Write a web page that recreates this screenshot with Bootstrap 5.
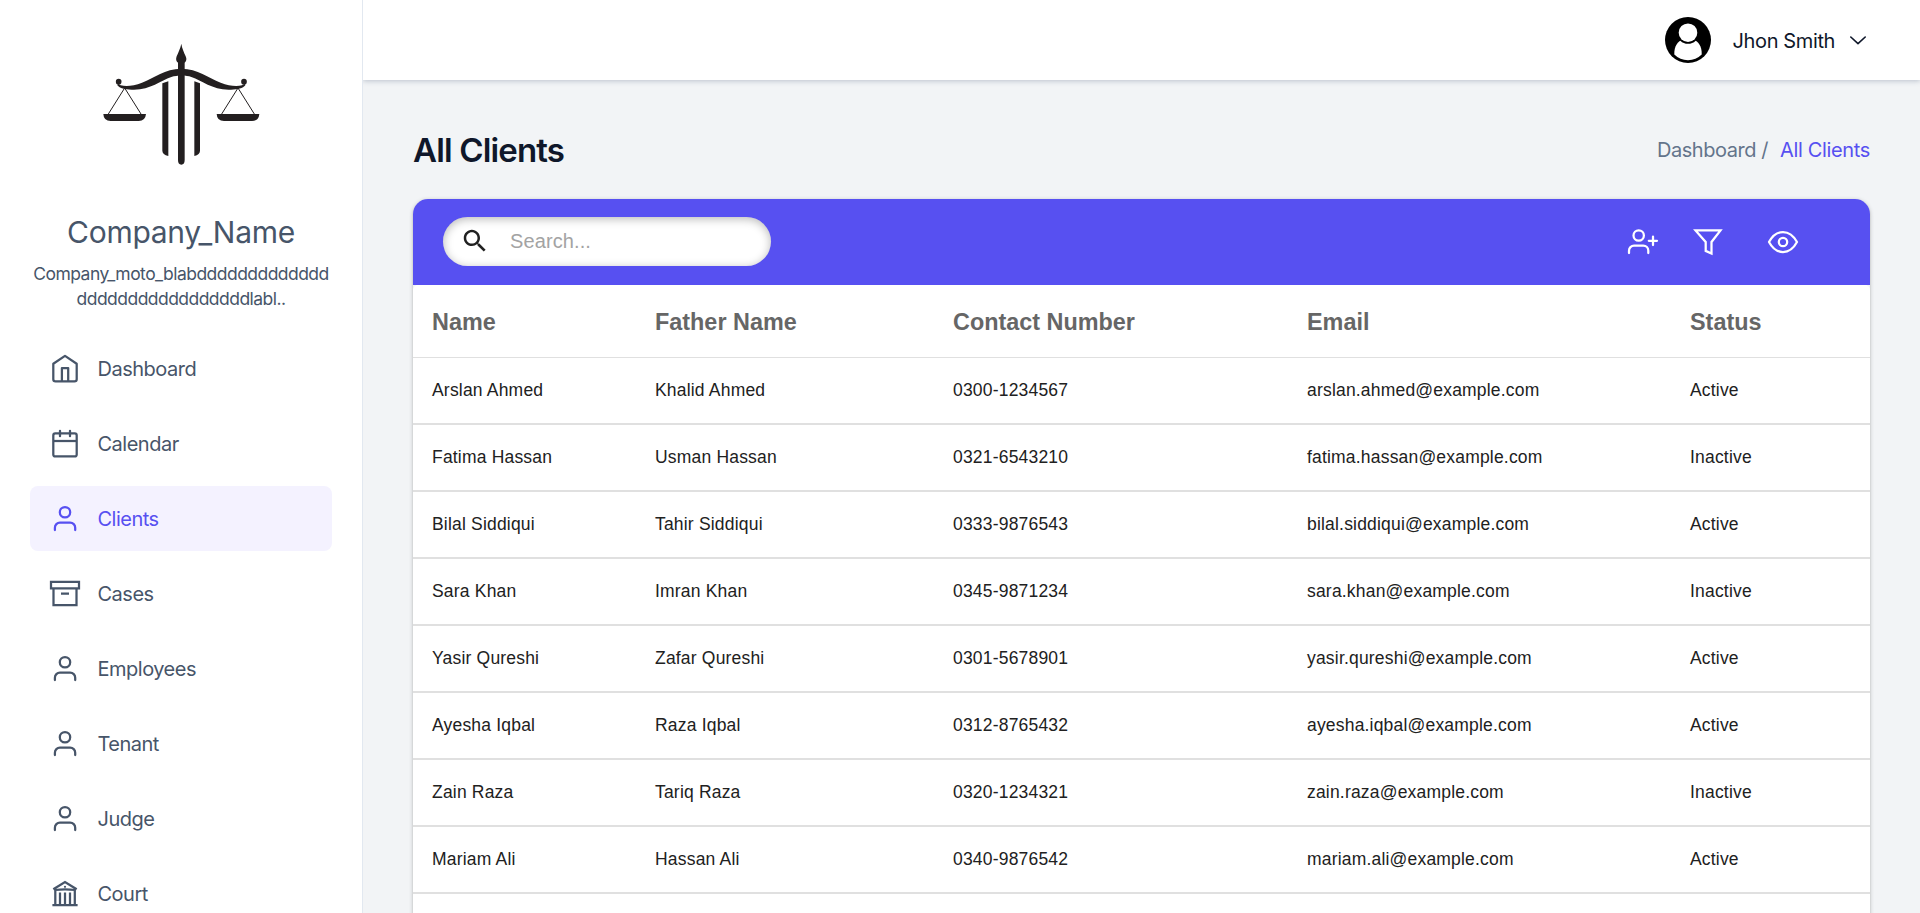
<!DOCTYPE html>
<html lang="en">
<head>
<meta charset="utf-8">
<meta name="viewport" content="width=device-width, initial-scale=1">
<title>All Clients</title>
<link href="https://cdn.jsdelivr.net/npm/bootstrap@5.3.0/dist/css/bootstrap.min.css" rel="stylesheet">
<style>
body{font-family:Inter,"Liberation Sans",sans-serif;font-size:20px;font-weight:400;color:#0f172a;background:#f2f4f6;letter-spacing:-.5px}
.side{width:363px;border-right:1px solid #e2e8f0;color:#475569}
.logo{margin-top:30px}
.company{font-size:30px;line-height:40px;font-weight:400;letter-spacing:-.3px;margin-top:32px}
.moto{font-size:17.5px;line-height:25px;font-weight:400;margin-top:9px;letter-spacing:-.54px}
.side-nav{gap:10px;padding:0 30px;margin-top:25px}
.side-nav .nav-link{height:65px;padding:1px 20px 0;gap:17.5px;color:#475569;border-radius:8px;white-space:nowrap}
.side-nav .nav-link.active{background:#f4f2ff;color:#5750f1}
.ic{width:30px;height:30px;fill:none;stroke:currentColor;stroke-width:2.25;flex:none;overflow:visible}
.topbar{height:80px;padding-right:54px;box-shadow:0 1px 5px rgba(100,116,139,.4);z-index:1}
.user{gap:22px}
.uname{padding-top:2px;letter-spacing:-.38px}
.chev{margin-left:-7px}
.page-title{font-size:33px;line-height:40px;font-weight:600;letter-spacing:-.85px}
.page-main{padding:50px 50px 0}
.crumb{color:#64748b;letter-spacing:-.45px}
.crumb a{color:#5750f1;text-decoration:none;letter-spacing:-.35px}
.panel{margin-top:29px;border-radius:15px 15px 0 0;box-shadow:0 2px 1px -1px rgba(0,0,0,.3),0 1px 1px rgba(0,0,0,.25),0 1px 4px rgba(0,0,0,.22)}
.tools{height:86px;padding:0 72px 0 30px;background:#5750f1;border-radius:15px 15px 0 0;color:#fff}
.find{width:328px;height:49px;margin-bottom:2px;padding-left:17px;gap:20px;border-radius:25px;box-shadow:inset 0 2px 10px rgba(0,0,0,.28)}
.find input{border:0;outline:0;background:none;font:400 20px "Liberation Sans",sans-serif;letter-spacing:.1px;width:220px;padding:1px 0 0}
.find input::placeholder{color:#a3a3a3;opacity:1}
.act-filter{margin-left:35px}
.act-view{margin-left:45px}
.clients{table-layout:fixed;width:100%;border-collapse:separate;border-spacing:0;background:#fff;border-radius:5px 5px 0 0;font-family:"Liberation Sans",Arial,sans-serif}
.clients th{height:73px;padding:4px 0 0 19px;font-size:23.4px;font-weight:700;letter-spacing:0;color:#666;border-bottom:1px solid #e0e0e0}
.clients td{height:67px;padding:0 0 0 19px;font-size:17.5px;font-weight:400;letter-spacing:.19px;color:#212121;border-bottom:2px solid #e0e0e0}
</style>
</head>
<body class="vh-100 overflow-hidden">
<svg class="d-none">
<symbol id="person" viewBox="0 0 30 30"><circle cx="15" cy="8.2" r="5.2"/><path d="M4.900 26v-2.300a5 5 0 0 1 5-5h10.300a5 5 0 0 1 5 5V26" stroke-linecap="round"/></symbol>
</svg>
<div class="d-flex vh-100">
<aside class="side bg-white flex-shrink-0 overflow-hidden">
  <div class="logo text-center lh-1">
    <svg class="d-block mx-auto" width="200" height="150" viewBox="2 0 600 450" fill="#231f20">
      <path d="M303 41c2 14 8 26 13 38 4 9 2 15-3 19v292q0 14-10 14t-10-14V98c-6-4-7-10-4-19 5-12 11-24 14-38z"/>
      <path d="M303 116c-50 0-80 28-118 42-25 10-47 12-64 8l-8-5-2 5c8 10 26 14 50 13 50 0 80-27 112-38 18-6 45-6 60 0 32 11 62 38 112 38 24 1 42-3 50-13l-2-5-8 5c-17 4-39 2-64-8-38-14-68-42-118-42z"/>
      <circle cx="115" cy="155" r="8.5"/><circle cx="491" cy="155" r="8.5"/>
      <path d="M246 160l18-6v224q-18-4-18-16zM359 160l-17-6v224q17-4 17-16z"/>
      <path d="M69 252h128q-2 21-22 21H91q-21 0-22-21zM409 252h128q-2 21-22 21h-84q-21 0-22-21z"/>
      <path d="M84 252l49-78 49 78M424 252l49-78 49 78" fill="none" stroke="#231f20" stroke-width="3"/>
    </svg>
  </div>
  <div class="company text-center">Company_Name</div>
  <div class="moto text-center">Company_moto_blabddddddddddddd<br>dddddddddddddddddlabl..</div>
  <nav class="side-nav nav flex-column flex-nowrap">
    <a class="nav-link d-flex align-items-center" href="#"><svg class="ic" viewBox="0 0 30 30"><path d="M15 1.900 3.300 9.700v15.500q0 2.200 2.200 2.200h19q2.200 0 2.200-2.200V9.700zM11.900 27.400V14.100h6.300v13.300" stroke-linejoin="round"/></svg>Dashboard</a>
    <a class="nav-link d-flex align-items-center" href="#"><svg class="ic" viewBox="0 0 30 30"><rect x="3.300" y="4.400" width="23.400" height="23" rx="2"/><path d="M3.300 12h23.400"/><path d="M10 1.800v5.400M20 1.800v5.400" stroke-linecap="round"/></svg>Calendar</a>
    <a class="nav-link active d-flex align-items-center" href="#"><svg class="ic"><use href="#person"/></svg>Clients</a>
    <a class="nav-link d-flex align-items-center" href="#"><svg class="ic" viewBox="0 0 30 30"><path d="M1 2.800h28v6.600H1zM3.500 9.400v16.800h23V9.400M11 14.600h8"/></svg>Cases</a>
    <a class="nav-link d-flex align-items-center" href="#"><svg class="ic"><use href="#person"/></svg>Employees</a>
    <a class="nav-link d-flex align-items-center" href="#"><svg class="ic"><use href="#person"/></svg>Tenant</a>
    <a class="nav-link d-flex align-items-center" href="#"><svg class="ic"><use href="#person"/></svg>Judge</a>
    <a class="nav-link d-flex align-items-center" href="#"><svg class="ic" viewBox="0 0 30 30"><path d="M3.300 10.300 15 3l11.700 7.300M5 11q10-1.200 20 0M5.300 10.800V25M10 13.400V25M15 13.400V25M20 13.400V25M24.800 10.800V25M2.400 26.200h25.200"/><circle cx="15" cy="7.800" r="1.100" fill="currentColor" stroke="none"/></svg>Court</a>
  </nav>
</aside>
<div class="flex-grow-1 d-flex flex-column overflow-hidden">
  <header class="topbar bg-white d-flex align-items-center justify-content-end flex-shrink-0 position-relative">
    <div class="user d-flex align-items-center">
      <svg width="46" height="46" viewBox="0 0 46 46"><circle cx="23" cy="23" r="23"/><path d="M9.300 37.500C9 29 13 24.500 16.500 23h13c3.500 1.500 7.500 6 7.200 14.500Q31 43.200 23 43.200T9.300 37.500z" fill="#fff"/><circle cx="23" cy="16" r="10.800"/><circle cx="23" cy="15.700" r="9.300" fill="#fff"/></svg>
      <span class="uname">Jhon Smith</span>
      <svg class="chev" width="16" height="9" viewBox="0 0 16 9" fill="none" stroke="#0f172a" stroke-width="1.600" stroke-linecap="round" stroke-linejoin="round"><path d="M.8 1 8 7.700 15.200 1"/></svg>
    </div>
  </header>
  <main class="page-main">
    <div class="d-flex align-items-center justify-content-between">
      <h1 class="page-title mb-0">All Clients</h1>
      <div class="crumb d-flex"><span>Dashboard /</span><a class="ms-2 ps-1" href="#">All Clients</a></div>
    </div>
    <section class="panel">
      <div class="tools d-flex align-items-center justify-content-between">
        <div class="find bg-white d-flex align-items-center"><svg width="30" height="30" viewBox="0 0 24 24" fill="#212121"><path d="M15.500 14h-.79l-.28-.27C15.410 12.590 16 11.110 16 9.500 16 5.910 13.090 3 9.500 3S3 5.910 3 9.500 5.910 16 9.500 16c1.610 0 3.090-.59 4.230-1.570l.27.28v.79l5 4.990L20.490 19zm-6 0C7.010 14 5 11.990 5 9.500S7.010 5 9.500 5 14 7.010 14 9.500 11.990 14 9.500 14"/></svg><input type="text" placeholder="Search..."></div>
        <div class="d-flex align-items-center">
          <svg class="ic" viewBox="0 0 30 30"><circle cx="10.700" cy="8.500" r="5.200"/><path d="M1 26v-2.300a5 5 0 0 1 5-5h9.300a5 5 0 0 1 5 5V26M25 9.500v8.500M20.800 13.800H29" stroke-linecap="round"/></svg>
          <svg class="ic act-filter" viewBox="0 0 30 30"><path d="M2.500 3.400h25L18.500 15v11.500l-5.800-2.600V15z"/></svg>
          <svg class="ic act-view" viewBox="0 0 30 30"><path d="M1 15C4.500 8.500 9 5 15 5s10.500 3.500 14 10c-3.500 6.500-8 10-14 10S4.500 21.500 1 15z" stroke-linejoin="round"/><circle cx="15" cy="15" r="4.200"/></svg>
        </div>
      </div>
      <table class="clients">
        <colgroup><col style="width:223px"><col style="width:298px"><col style="width:354px"><col style="width:383px"><col></colgroup>
        <thead><tr><th>Name</th><th>Father Name</th><th>Contact Number</th><th>Email</th><th>Status</th></tr></thead>
        <tbody>
          <tr><td>Arslan Ahmed</td><td>Khalid Ahmed</td><td>0300-1234567</td><td>arslan.ahmed@example.com</td><td>Active</td></tr>
          <tr><td>Fatima Hassan</td><td>Usman Hassan</td><td>0321-6543210</td><td>fatima.hassan@example.com</td><td>Inactive</td></tr>
          <tr><td>Bilal Siddiqui</td><td>Tahir Siddiqui</td><td>0333-9876543</td><td>bilal.siddiqui@example.com</td><td>Active</td></tr>
          <tr><td>Sara Khan</td><td>Imran Khan</td><td>0345-9871234</td><td>sara.khan@example.com</td><td>Inactive</td></tr>
          <tr><td>Yasir Qureshi</td><td>Zafar Qureshi</td><td>0301-5678901</td><td>yasir.qureshi@example.com</td><td>Active</td></tr>
          <tr><td>Ayesha Iqbal</td><td>Raza Iqbal</td><td>0312-8765432</td><td>ayesha.iqbal@example.com</td><td>Active</td></tr>
          <tr><td>Zain Raza</td><td>Tariq Raza</td><td>0320-1234321</td><td>zain.raza@example.com</td><td>Inactive</td></tr>
          <tr><td>Mariam Ali</td><td>Hassan Ali</td><td>0340-9876542</td><td>mariam.ali@example.com</td><td>Active</td></tr>
          <tr><td></td><td></td><td></td><td></td><td></td></tr>
        </tbody>
      </table>
    </section>
  </main>
</div>
</div>
<script src="https://cdn.jsdelivr.net/npm/bootstrap@5.3.0/dist/js/bootstrap.bundle.min.js"></script>
</body>
</html>
